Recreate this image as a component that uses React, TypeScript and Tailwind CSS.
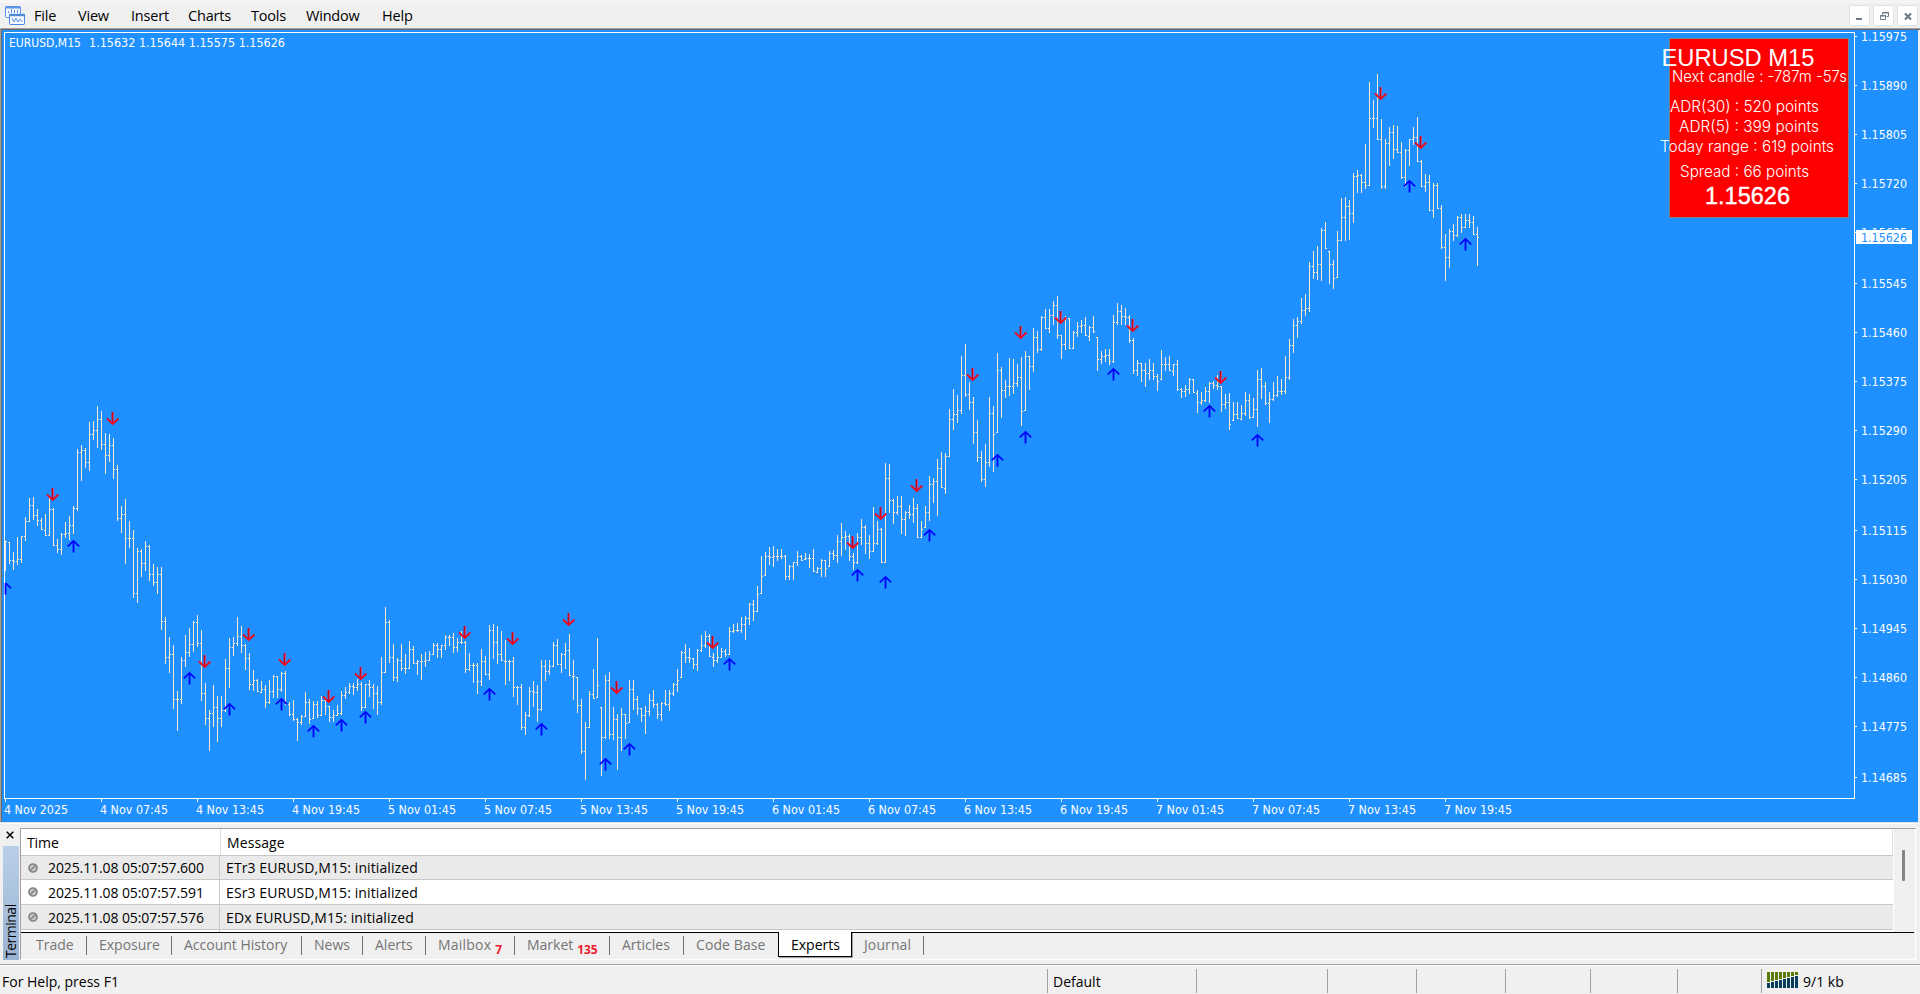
import { FC } from "react";

// [high, low, close] of every bar, in chart pixels
const bars: [number, number, number][] = [
  [541, 571, 541], [542, 564, 560], [552, 570, 561], [537, 565, 559], [536, 563, 536],
  [517, 541, 521], [498, 522, 505], [497, 520, 515], [509, 526, 520], [518, 530, 530],
  [514, 536, 536], [498, 536, 509], [508, 546, 545], [539, 553, 549], [533, 555, 534],
  [522, 538, 533], [516, 540, 525], [506, 534, 508], [449, 511, 452], [445, 481, 450],
  [448, 468, 462], [422, 471, 434], [421, 440, 430], [406, 448, 419], [411, 450, 444],
  [433, 474, 455], [434, 462, 445], [438, 479, 469], [465, 521, 518], [506, 533, 514],
  [499, 564, 538], [521, 548, 538], [530, 598, 593], [548, 603, 551], [549, 577, 563],
  [541, 571, 546], [545, 581, 574], [564, 586, 582], [567, 594, 574], [567, 630, 621],
  [617, 664, 657], [637, 673, 654], [645, 709, 699], [691, 731, 699], [657, 704, 660],
  [635, 667, 652], [628, 657, 644], [621, 652, 622], [615, 647, 643], [630, 701, 693],
  [683, 725, 718], [710, 751, 713], [685, 727, 707], [696, 742, 718], [696, 727, 710],
  [659, 712, 668], [638, 688, 647], [637, 656, 643], [617, 646, 636], [626, 653, 645],
  [644, 670, 658], [653, 690, 684], [670, 691, 680], [679, 692, 692], [681, 693, 689],
  [685, 708, 702], [680, 704, 691], [675, 698, 676], [676, 698, 689], [672, 692, 673],
  [671, 705, 704], [702, 716, 714], [700, 721, 719], [718, 741, 722], [715, 725, 716],
  [692, 717, 702], [699, 724, 719], [701, 719, 704], [701, 718, 715], [696, 716, 700],
  [697, 715, 706], [706, 722, 717], [710, 722, 715], [705, 716, 713], [691, 715, 695],
  [687, 699, 692], [683, 694, 686], [683, 695, 687], [679, 691, 684], [682, 711, 707],
  [684, 708, 684], [680, 697, 687], [684, 709, 693], [686, 715, 702], [657, 705, 672],
  [607, 673, 622], [620, 663, 657], [644, 681, 677], [658, 682, 660], [644, 671, 668],
  [654, 674, 668], [641, 669, 649], [646, 664, 663], [660, 675, 661], [654, 680, 661],
  [652, 667, 660], [651, 661, 654], [643, 655, 645], [643, 658, 649], [645, 658, 645],
  [635, 650, 637], [635, 646, 637], [633, 653, 647], [638, 652, 642], [631, 644, 642],
  [641, 673, 669], [653, 671, 665], [663, 683, 665], [663, 694, 681], [649, 686, 661],
  [656, 675, 674], [625, 680, 630], [624, 659, 642], [626, 664, 654], [631, 661, 661],
  [640, 685, 661], [660, 681, 661], [657, 697, 687], [686, 705, 687], [684, 730, 727],
  [712, 735, 715], [687, 717, 691], [681, 707, 692], [685, 722, 709], [660, 711, 666],
  [660, 681, 671], [660, 675, 666], [642, 667, 645], [639, 665, 664], [653, 673, 654],
  [643, 669, 650], [634, 676, 676], [660, 700, 676], [677, 713, 705], [699, 754, 751],
  [722, 780, 727], [691, 728, 694], [669, 699, 699], [638, 698, 685], [707, 776, 737],
  [675, 739, 680], [672, 739, 734], [707, 740, 719], [714, 770, 737], [708, 751, 714],
  [714, 739, 723], [680, 723, 689], [680, 710, 699], [696, 715, 708], [708, 722, 715],
  [706, 734, 711], [694, 716, 700], [690, 708, 704], [703, 719, 714], [702, 721, 703],
  [690, 706, 704], [690, 711, 693], [683, 696, 684], [669, 692, 680], [651, 678, 652],
  [644, 663, 657], [648, 663, 658], [658, 669, 664], [649, 671, 650], [635, 652, 645],
  [631, 648, 636], [634, 657, 657], [653, 667, 660], [646, 663, 657], [648, 658, 651],
  [649, 657, 654], [627, 655, 631], [624, 633, 630], [623, 632, 630], [617, 633, 624],
  [616, 640, 618], [603, 625, 604], [600, 621, 611], [586, 612, 594], [556, 594, 576],
  [552, 576, 556], [547, 565, 557], [546, 567, 556], [549, 561, 556], [549, 559, 556],
  [555, 580, 576], [565, 580, 566], [562, 580, 562], [551, 566, 556], [555, 561, 560],
  [553, 560, 558], [554, 568, 558], [549, 572, 572], [567, 573, 568], [559, 577, 560],
  [560, 577, 568], [551, 567, 553], [550, 560, 555], [535, 563, 541], [523, 556, 537],
  [531, 550, 536], [534, 561, 556], [553, 570, 562], [533, 564, 537], [519, 545, 527],
  [525, 554, 543], [535, 559, 551], [507, 552, 543], [521, 545, 529], [528, 563, 563],
  [463, 563, 478], [464, 513, 500], [499, 524, 512], [496, 515, 506], [496, 534, 519],
  [511, 536, 512], [505, 519, 514], [498, 523, 508], [504, 538, 537], [521, 538, 529],
  [506, 528, 512], [476, 521, 484], [478, 503, 481], [459, 516, 468], [452, 488, 488],
  [453, 494, 456], [409, 457, 419], [389, 430, 414], [395, 423, 410], [356, 414, 375],
  [344, 397, 394], [382, 410, 402], [397, 444, 432], [420, 462, 457], [451, 482, 479],
  [444, 487, 462], [397, 467, 413], [406, 472, 434], [353, 433, 370], [367, 418, 390],
  [380, 398, 386], [358, 396, 386], [359, 394, 383], [364, 387, 377], [357, 426, 411],
  [351, 411, 356], [356, 390, 366], [328, 372, 337], [331, 353, 349], [316, 351, 317],
  [309, 329, 328], [309, 333, 315], [301, 325, 305], [296, 339, 335], [335, 359, 344],
  [316, 350, 318], [318, 349, 349], [331, 349, 332], [322, 337, 326], [320, 333, 325],
  [317, 336, 336], [326, 341, 327], [316, 333, 331], [337, 371, 359], [351, 364, 356],
  [349, 362, 355], [349, 365, 361], [315, 363, 322], [303, 325, 311], [305, 325, 316],
  [308, 325, 317], [315, 343, 340], [338, 374, 370], [360, 376, 363], [363, 382, 370],
  [363, 387, 373], [359, 380, 370], [363, 380, 376], [374, 391, 381], [350, 380, 364],
  [357, 371, 364], [356, 371, 371], [364, 376, 364], [360, 391, 389], [388, 398, 391],
  [385, 397, 389], [378, 394, 379], [379, 393, 393], [390, 413, 402], [392, 405, 400],
  [387, 402, 391], [382, 403, 383], [381, 389, 385], [375, 390, 386], [386, 412, 404],
  [394, 409, 402], [393, 430, 424], [402, 421, 414], [402, 419, 419], [405, 420, 413],
  [392, 416, 400], [394, 419, 417], [398, 418, 409], [370, 427, 379], [368, 399, 386],
  [382, 405, 403], [392, 423, 399], [382, 401, 395], [376, 397, 391], [379, 395, 391],
  [356, 394, 377], [339, 380, 345], [319, 353, 325], [317, 338, 321], [298, 324, 310],
  [294, 316, 308], [262, 312, 266], [251, 279, 272], [246, 280, 264], [228, 281, 230],
  [222, 249, 249], [251, 284, 264], [260, 289, 278], [231, 278, 240], [198, 241, 217],
  [197, 241, 206], [200, 240, 213], [173, 223, 176], [170, 193, 175], [174, 193, 182],
  [144, 189, 185], [82, 186, 118], [100, 128, 118], [74, 140, 139], [119, 189, 186],
  [139, 189, 143], [127, 166, 132], [125, 159, 149], [126, 153, 152], [142, 179, 177],
  [149, 187, 150], [139, 166, 139], [127, 145, 137], [117, 162, 161], [160, 187, 186],
  [174, 192, 182], [175, 211, 210], [183, 218, 185], [183, 209, 208], [205, 249, 247],
  [234, 281, 257], [229, 268, 231], [224, 241, 235], [216, 237, 217], [214, 233, 227],
  [214, 228, 220], [214, 228, 222], [216, 235, 234], [227, 266, 237],
];

const sells = [
  [52, 488], [112, 412], [204, 655], [248, 628], [284, 653], [328, 690], [360, 667],
  [464, 626], [512, 632], [568, 613], [616, 681], [712, 636], [852, 536], [880, 507],
  [916, 479], [972, 368], [1020, 326], [1060, 311], [1132, 319], [1220, 371],
  [1380, 87], [1420, 136],
];

const buys = [
  [5, 582], [73, 540], [189, 672], [229, 703], [281, 698], [313, 725], [341, 719],
  [365, 711], [489, 688], [541, 723], [605, 758], [629, 743], [729, 658], [857, 569],
  [885, 576], [929, 529], [997, 454], [1025, 431], [1113, 368], [1209, 405],
  [1257, 434], [1409, 180], [1465, 238],
];

const prices: [string, number][] = [
  ["1.15975", 36], ["1.15890", 85], ["1.15805", 134], ["1.15720", 183], ["1.15635", 232],
  ["1.15545", 283], ["1.15460", 332], ["1.15375", 381], ["1.15290", 430], ["1.15205", 479],
  ["1.15115", 530], ["1.15030", 579], ["1.14945", 628], ["1.14860", 677], ["1.14775", 726],
  ["1.14685", 777],
];

const dates = [
  "4 Nov 2025", "4 Nov 07:45", "4 Nov 13:45", "4 Nov 19:45", "5 Nov 01:45", "5 Nov 07:45",
  "5 Nov 13:45", "5 Nov 19:45", "6 Nov 01:45", "6 Nov 07:45", "6 Nov 13:45", "6 Nov 19:45",
  "7 Nov 01:45", "7 Nov 07:45", "7 Nov 13:45", "7 Nov 19:45",
];

// text, x, baseline, width
const info: [string, number, number, number][] = [
  ["Next candle : -787m -57s", 1672, 82, 175],
  ["ADR(30) : 520 points", 1670, 112, 149],
  ["ADR(5) : 399 points", 1679, 132, 140],
  ["Today range : 619 points", 1660, 152, 174],
  ["Spread : 66 points", 1680, 177, 129],
];

const menu = [
  { label: "File", className: "w-[44px]" },
  { label: "View", className: "w-[53px]" },
  { label: "Insert", className: "w-[57px]" },
  { label: "Charts", className: "w-[63px]" },
  { label: "Tools", className: "w-[55px]" },
  { label: "Window", className: "w-[76px]" },
  { label: "Help", className: "w-[60px]" },
];

const logs = [
  { time: "2025.11.08 05:07:57.600", message: "ETr3 EURUSD,M15: initialized" },
  { time: "2025.11.08 05:07:57.591", message: "ESr3 EURUSD,M15: initialized" },
  { time: "2025.11.08 05:07:57.576", message: "EDx EURUSD,M15: initialized" },
];

const tabs = [
  { label: "Trade", className: "w-[66px] pl-[15px]" },
  { label: "Exposure", className: "w-[85px] pl-[12px]" },
  { label: "Account History", className: "w-[130px] pl-[12px]" },
  { label: "News", className: "w-[61px] pl-[12px]" },
  { label: "Alerts", className: "w-[63px] pl-[12px]" },
  { label: "Mailbox", badge: "7", className: "w-[89px] pl-[12px] tracking-[0.2px]" },
  { label: "Market", badge: "135", className: "w-[95px] pl-[12px]" },
  { label: "Articles", className: "w-[74px] pl-[12px]" },
  { label: "Code Base", last: true, className: "w-[94px] pl-[12px] tracking-[0.1px]" },
  { label: "Experts", active: true, className: "w-[74px] pl-[12px]" },
  { label: "Journal", className: "w-[72px] pl-[12px] tracking-[0.1px]" },
];

const MenuBar: FC = () => (
  <div className="flex h-[28px] border-t-[3px] border-[#f5f5f5] bg-[#f0f0f0]">
    <svg className="mt-[2px] ml-[4px] h-[21px] w-[22px]" viewBox="0 0 22 21">
      <rect x="1.5" y="1.5" width="15" height="11" rx="1" fill="#f4f8ff" stroke="#5f93ea" />
      <path d="M1 2.5h16" stroke="#5f93ea" strokeWidth="2" />
      <path d="M4.5 6v2M7.5 4v4M10.5 5v3M13.5 5v3" stroke="#5f93ea" />
      <rect x="5.5" y="9.5" width="15" height="10" rx="1" fill="#f4f8ff" stroke="#4b86e6" />
      <path d="M5 10h16" stroke="#4b86e6" strokeWidth="2.4" />
      <path d="M6 10h14" stroke="#4fa3a0" strokeDasharray="2 3" />
      <path d="M8 13l2 4 2-4 2 4 2-3 2 3" fill="none" stroke="#5f93ea" />
    </svg>
    <div className="ml-[8px] flex pt-[3px] text-[14.5px] leading-[20px] tracking-[-0.2px] text-black">
      {menu.map(({ label, className }) => (
        <span key={label} className={className}>
          {label}
        </span>
      ))}
    </div>
    <div className="mt-[2px] mr-[2px] ml-auto flex gap-[3px]">
      <div className="h-[21px] w-[21px] rounded-[2px] border border-[#e2e2e2] bg-white">
        <svg viewBox="0 0 19 19" className="h-[19px] w-[19px]">
          <path d="M6 13h6" stroke="#6d7b88" strokeWidth="2" />
        </svg>
      </div>
      <div className="h-[21px] w-[21px] rounded-[2px] border border-[#e2e2e2] bg-white">
        <svg viewBox="0 0 19 19" className="h-[19px] w-[19px]" fill="none" stroke="#6d7b88">
          <path d="M8.5 8.5V6.5h6v4h-2M8 7h7" />
          <path d="M6.5 9.5h5v4h-5zM6 10h6" />
        </svg>
      </div>
      <div className="h-[21px] w-[21px] rounded-[2px] border border-[#e2e2e2] bg-white">
        <svg viewBox="0 0 19 19" className="h-[19px] w-[19px]">
          <path d="M7 7.5l6 6M13 7.5l-6 6" stroke="#6d7b88" strokeWidth="2.2" />
        </svg>
      </div>
    </div>
  </div>
);

const Chart: FC = () => (
  <svg
    className="block h-[792px] w-[1916px] bg-[#1e90ff]"
    viewBox="2 30 1916 792"
    shapeRendering="crispEdges"
  >
    <g fill="#fff">
      <rect x="4" y="32" width="1851" height="1" />
      <rect x="4" y="32" width="1" height="767" />
      <rect x="4" y="798" width="1851" height="1" />
      <rect x="1854" y="32" width="1" height="767" />
    </g>

    <g fill="#fce6cc">
      {bars.map(([high, low, close], i) => {
        const x = 5 + i * 4;
        // bars open at the previous close, kept inside the bar's own range
        const open = i > 0 ? Math.min(Math.max(bars[i - 1][2], high), low - 1) : high;
        return (
          <g key={i}>
            <rect x={x} y={high} width="1" height={low - high} />
            {i > 0 ? <rect x={x - 1} y={open} width="1" height="1" /> : null}
            <rect x={x + 1} y={Math.min(close, low - 1)} width="1" height="1" />
          </g>
        );
      })}
    </g>

    <g shapeRendering="geometricPrecision" fill="none">
      {sells.map(([x, y]) => (
        <g key={x}>
          <path d={`M${x + 1.6} ${y}v11`} stroke="#d070d8" strokeWidth="1" />
          <path d={`M${x + 0.5} ${y}v12`} stroke="#c40414" strokeWidth="1.8" />
          <path d={`M${x - 5} ${y + 6.5}l5.7 5.4 5.7-5.4`} stroke="#f5061c" strokeWidth="1.8" />
        </g>
      ))}
      {buys.map(([x, y]) => (
        <g key={x} stroke="#0000ff">
          <path d={`M${x + 0.5} ${y + 1}v11.5`} strokeWidth="1.8" />
          <path
            d={x > 5 ? `M${x - 5.2} ${y + 6.4}l5.7-5.4 5.7 5.4` : `M${x + 0.5} ${y + 1}l5.7 5.4`}
            strokeWidth="1.7"
          />
        </g>
      ))}
    </g>

    <g fill="#fff" fontFamily="'DejaVu Sans Condensed', 'Noto Sans', sans-serif" fontSize="12.3">
      <text x="9" y="47" textLength="72" lengthAdjust="spacingAndGlyphs">
        EURUSD,M15
      </text>
      <text x="89" y="47" textLength="196" lengthAdjust="spacingAndGlyphs">
        1.15632 1.15644 1.15575 1.15626
      </text>
      {prices.map(([price, y]) => (
        <g key={price}>
          <rect x="1855" y={y} width="2" height="1" />
          <text x="1861" y={y + 5} textLength="46" lengthAdjust="spacingAndGlyphs">
            {price}
          </text>
        </g>
      ))}
      {dates.map((date, i) => (
        <g key={date}>
          <rect x={5 + i * 96} y="799" width="1" height="3" />
          <text
            x={4 + i * 96}
            y="814"
            textLength={i ? 68 : 64}
            lengthAdjust="spacingAndGlyphs"
          >
            {date}
          </text>
        </g>
      ))}
      <rect x="1856" y="230" width="56" height="14" />
      <text x="1861" y="242" fill="#1e90ff" textLength="46" lengthAdjust="spacingAndGlyphs">
        1.15626
      </text>
    </g>

    <rect x="1669.5" y="38.5" width="179" height="179" fill="#ff0000" stroke="#808080" />
    <g fill="#fff" fontFamily="'Liberation Sans', Arial, sans-serif" fontSize="24">
      <text x="1661.5" y="65.5" textLength="153" lengthAdjust="spacingAndGlyphs">
        EURUSD M15
      </text>
      <text
        x="1705"
        y="204"
        textLength="85"
        lengthAdjust="spacingAndGlyphs"
        stroke="#fff"
        strokeWidth="0.4"
      >
        1.15626
      </text>
    </g>
    <g fill="#fff" fontFamily="Inter, 'Liberation Sans', sans-serif" fontSize="16" fontWeight="300">
      {info.map(([text, x, y, width]) => (
        <text key={text} x={x} y={y} textLength={width} lengthAdjust="spacingAndGlyphs">
          {text}
        </text>
      ))}
    </g>
  </svg>
);

const Terminal: FC = () => (
  <div className="flex h-[136px] pr-[4px]">
    <div className="flex w-[20px] flex-col pt-[7px] pl-[3px]">
      <svg viewBox="0 0 8 8" className="ml-[3px] h-[8px] w-[8px]">
        <path d="M0.7 0.7l6.6 6.6M7.3 0.7L0.7 7.3" stroke="#000" strokeWidth="1.5" />
      </svg>
      <div className="mt-[7px] flex h-[114px] w-[16px] rotate-180 items-center bg-linear-to-t from-[#b9cfe9] to-[#9ab3d3] pt-[2px] text-[14px] leading-[16px] tracking-[-0.5px] text-black [writing-mode:vertical-rl]">
        Terminal
      </div>
    </div>
    <div className="mt-[4px] flex h-[132px] grow flex-col border-t border-r border-b border-l border-t-[#a0a0a0] border-r-white border-b-white border-l-[#a0a0a0]">
      <div className="flex h-[103px] overflow-hidden bg-white">
        <div className="w-[1872px] text-[14px] tracking-[-0.1px] text-black">
          <div className="flex h-[27px] border-b border-[#c8c8c8] leading-[28px]">
            <div className="w-[200px] border-r border-[#e0e0e0] pl-[6px]">Time</div>
            <div className="grow border-r border-[#e0e0e0] pl-[6px] tracking-[0.1px]">Message</div>
          </div>
          {logs.map(({ time, message }, i) => (
            <div
              key={time}
              className={
                i % 2
                  ? "flex h-[25px] border-b border-[#c8c8c8] bg-white leading-[26px]"
                  : i
                    ? "flex h-[25px] border-b border-[#c8c8c8] bg-[#eaeaea] leading-[26px]"
                    : "flex h-[24px] border-b border-[#c8c8c8] bg-[#eaeaea] leading-[24px]"
              }
            >
              <div className="flex w-[199px] border-r border-[#c8c8c8] pl-[7px]">
                <svg viewBox="0 0 10 10" className="mt-[7px] mr-[10px] h-[10px] w-[10px]">
                  <circle cx="5" cy="5" r="4" fill="#c4c4c4" stroke="#828282" strokeWidth="1.6" />
                  <path d="M2.4 7.6l5.2-5.2" stroke="#828282" strokeWidth="1.4" />
                </svg>
                {time}
              </div>
              <div className="pl-[6px] tracking-[0.1px]">{message}</div>
            </div>
          ))}
          <div className="h-[2px] w-[199px] border-r border-[#c8c8c8]" />
        </div>
        <div className="ml-[1px] grow bg-[#f0f0f0] pt-[21px] pl-[8px]">
          <div className="h-[31px] w-[3px] rounded-[1px] bg-[#858585]" />
        </div>
      </div>
      <div className="flex h-[27px] text-[14px] text-[#757575]">
        {tabs.map(({ label, badge, active, last, className }) =>
          active ? (
            <div
              key={label}
              className={
                className +
                " h-[25px] border-x border-b border-black bg-white leading-[25px] text-black shadow-[1px_1px_0_#a0a0a0]"
              }
            >
              {label}
            </div>
          ) : (
            <div key={label} className={className + " flex border-t border-black"}>
              <span className="grow leading-[24px] whitespace-nowrap">
                {label}
                {badge ? (
                  <span className="relative top-[4px] ml-[4px] text-[12px] font-bold tracking-[-0.1px] text-[#ee1c2e]">
                    {badge}
                  </span>
                ) : null}
              </span>
              {last ? null : <span className="mt-[3px] h-[19px] w-px bg-[#6d6d6d]" />}
            </div>
          )
        )}
        <div className="mr-[1px] grow border-t border-black" />
      </div>
    </div>
  </div>
);

const StatusBar: FC = () => (
  <div className="flex h-[30px] border-t border-[#a0a0a0] text-[14px] text-black">
    <div className="flex grow border-t border-white pt-[3px] leading-[26px]">
      <div className="h-[24px] w-[1047px] pl-[2px]">For Help, press F1</div>
      <div className="h-[24px] w-[149px] border-l border-[#a0a0a0] pl-[5px]">Default</div>
      <div className="h-[24px] w-[131px] border-l border-[#a0a0a0]" />
      <div className="h-[24px] w-[89px] border-l border-[#a0a0a0]" />
      <div className="h-[24px] w-[89px] border-l border-[#a0a0a0]" />
      <div className="h-[24px] w-[85px] border-l border-[#a0a0a0]" />
      <div className="h-[24px] w-[87px] border-l border-[#a0a0a0]" />
      <div className="h-[24px] w-[84px] border-l border-[#a0a0a0]" />
      <div className="flex h-[24px] border-l border-[#a0a0a0] pl-[5px]">
        <svg viewBox="0 0 31 16" className="mt-[3px] mr-[5px] h-[16px] w-[31px]">
          {[0, 1, 2, 3, 4, 5, 6, 7].map((i) => (
            <g key={i} shapeRendering="crispEdges">
              <rect x={i * 4} y="0" width="3" height={10 - i} fill="#5b7a00" />
              <rect x={i * 4} y={11 - i} width="3" height={5 + i} fill="#063e5c" />
            </g>
          ))}
        </svg>
        9/1 kb
      </div>
    </div>
  </div>
);

export default function App() {
  return (
    <div className="flex h-[994px] w-[1920px] flex-col overflow-hidden bg-[#f0f0f0] font-['Open_Sans','Noto_Sans',sans-serif]">
      <MenuBar />
      <div className="border-t border-l border-[#a0a0a0]">
        <div className="border-t border-l border-[#696969]">
          <Chart />
        </div>
      </div>
      <div className="h-[2px] border-t border-b border-t-[#e3e3e3] border-b-white" />
      <Terminal />
      <div className="h-[4px]" />
      <StatusBar />
    </div>
  );
}
